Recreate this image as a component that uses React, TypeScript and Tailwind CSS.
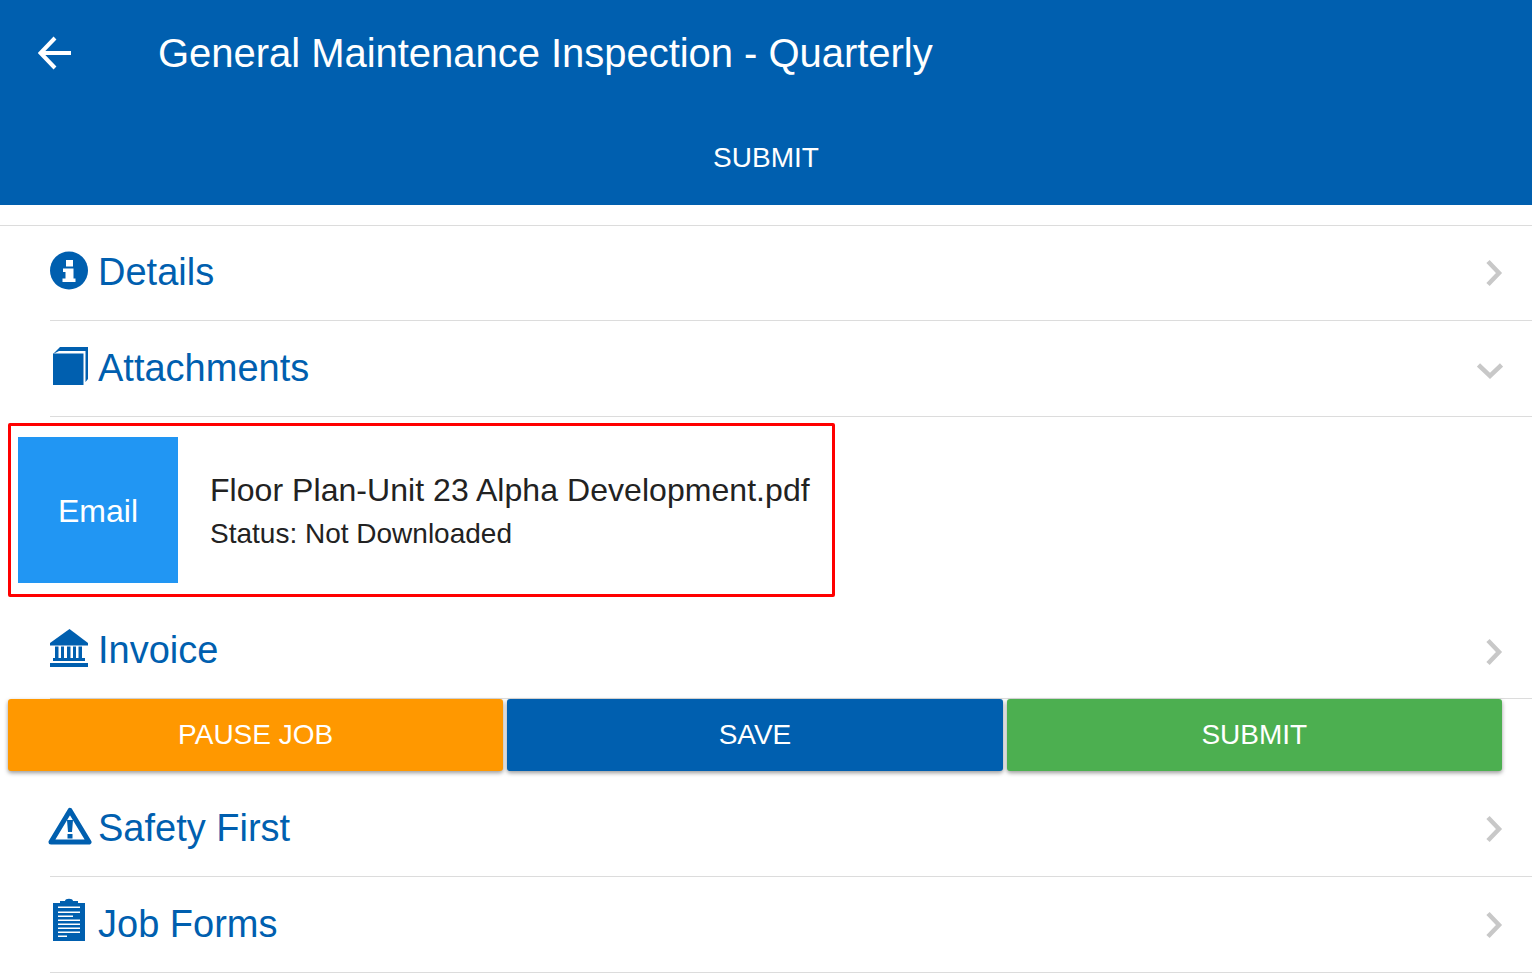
function ChevronRight() {
  return (
    <svg width="18" height="28" viewBox="0 0 18 28" className="shrink-0">
      <path d="M3 2.5 L14 14 L3 25.5" fill="none" stroke="#c8c8c8" strokeWidth="4.5" />
    </svg>
  );
}

function ChevronDown() {
  return (
    <svg width="26" height="18" viewBox="0 0 26 18" className="shrink-0">
      <path d="M1.5 3 L13 14 L24.5 3" fill="none" stroke="#c8c8c8" strokeWidth="4.5" />
    </svg>
  );
}

function InfoIcon() {
  return (
    <svg width="39" height="39" viewBox="0 0 39 39">
      <circle cx="19" cy="19.5" r="19" fill="#005faf" />
      <path d="M16 9 H23 V15.5 H16 Z M13 17.5 H23.5 V27.5 H25.5 V31 H12.5 V27.5 H15.5 V21 H13 Z" fill="#fff" />
    </svg>
  );
}

function BookIcon() {
  return (
    <svg width="36" height="38" viewBox="0 0 36 38" fill="#005faf">
      <path d="M0 7 L7 0 H35 V32 L32.5 35 V4 H6 Z" />
      <path d="M0 6.5 H30.5 V38 H0 Z" />
      <path d="M6 5.3 H32" stroke="#fff" strokeWidth="0.8" opacity="0.6" />
    </svg>
  );
}

function BankIcon() {
  return (
    <svg width="39" height="38" viewBox="0 0 39 38" fill="#005faf">
      <path d="M19.5 0 L38 14 V16.5 H0 V14 Z" />
      <path d="M5 17.5 H8.5 V29 H5 Z M11 17.5 H14 V29 H11 Z M17 17.5 H20.5 V29 H17 Z M23 17.5 H26 V29 H23 Z M28.5 17.5 H32 V29 H28.5 Z" />
      <path d="M3 29 H35 V32 H3 Z M0 34 H38 V38 H0 Z" />
    </svg>
  );
}

function WarningIcon() {
  return (
    <svg width="44" height="38" viewBox="0 0 44 38">
      <path d="M22 3.5 L41 35 L3 35 Z" fill="none" stroke="#005faf" strokeWidth="5" strokeLinejoin="round" />
      <path d="M19 13 H25 L24 25 H20 Z M19.5 27 H24.5 V31.5 H19.5 Z" fill="#005faf" />
    </svg>
  );
}

function ClipboardIcon() {
  return (
    <svg width="32" height="43" viewBox="0 0 32 43" fill="#005faf">
      <path d="M0 5 H32 V43 H0 Z" />
      <path d="M5 8.5 H27 V10 H5 Z M5 13.5 H27 V15 H5 Z M5 17.5 H20 V19 H5 Z M5 21.5 H27 V23 H5 Z M5 25.5 H27 V27 H5 Z M5 29.5 H27 V31 H5 Z M5 33.5 H27 V35 H5 Z M5 37.5 H14 V39 H5 Z" fill="#fff" />
      <path d="M7 3 H12 C12 0 20 0 20 3 H25 V8 H7 Z" />
    </svg>
  );
}

function SectionRow({ icon, label, gap, open, height, chevron = '' }: { icon: React.ReactNode; label: string; gap: string; open?: boolean; height: string; chevron?: string }) {
  return (
    <div className={`ml-[50px] flex items-center border-b border-[#dcdcdc] ${height}`}>
      <div className="flex flex-1 items-center">
        {icon}
        <span className={`pb-[2px] text-[38px] leading-none text-[#005faf] ${gap}`}>{label}</span>
      </div>
      <div className={`mr-[29px] ${chevron}`}>{open ? <ChevronDown /> : <ChevronRight />}</div>
    </div>
  );
}

export default function App() {
  return (
    <div className="h-[978px] w-[1532px] overflow-hidden bg-white font-['Liberation_Sans',Arial,sans-serif]">
      {/* Header */}
      <header className="flex h-[205px] flex-col bg-[#005faf] text-white">
        <div className="flex h-[105px] shrink-0 items-center pl-[38px]">
          <svg width="34" height="34" viewBox="0 0 34 34" fill="none" stroke="#fff" strokeWidth="4" className="shrink-0">
            <path d="M33 17 H3 M17 2 L2.5 17 L17 32" />
          </svg>
          <h1 className="ml-[86px] text-[40px] font-normal leading-none tracking-[-0.03px]">General Maintenance Inspection - Quarterly</h1>
        </div>
        <div className="flex h-[100px] items-center justify-center pt-[6px] text-[28px] leading-none">SUBMIT</div>
      </header>

      <div className="mt-5 border-t border-[#dcdcdc]">
        <SectionRow height="h-[95px]" gap="ml-[9px]" label="Details" icon={<div className="mb-[6px]"><InfoIcon /></div>} />
        <SectionRow height="h-[96px]" gap="ml-[9px]" label="Attachments" open chevron="mt-[4px]" icon={<div className="mb-[6px] ml-[3px]"><BookIcon /></div>} />

        {/* Attachment */}
        <div className="ml-2 mt-[6px] flex h-[174px] w-[827px] items-center rounded-[2px] border-[3px] border-[#ff0000] pl-[7px]">
          <div className="flex h-[146px] w-40 items-center justify-center bg-[#2196f3] pt-[2px] text-[32px] text-white">Email</div>
          <div className="ml-8 pt-[1px] text-[#222]">
            <div className="text-[32px] leading-[40px] tracking-[0.05px]">Floor Plan-Unit 23 Alpha Development.pdf</div>
            <div className="mt-[7px] text-[28px] leading-[34px]">Status: Not Downloaded</div>
          </div>
        </div>

        <div className="pt-[6px]">
          <SectionRow height="h-[96px]" gap="ml-[9px]" label="Invoice" chevron="mt-[2px]" icon={<div className="mb-[6px]"><BankIcon /></div>} />
        </div>

        {/* Actions */}
        <div className="flex gap-1 pl-2 pr-[30px]">
          <button className="h-[72px] flex-1 rounded-[3px] bg-[#ff9800] text-[28px] text-white shadow-[0_2px_4px_rgba(0,0,0,0.4)]">PAUSE JOB</button>
          <button className="h-[72px] flex-1 rounded-[3px] bg-[#005faf] text-[28px] text-white shadow-[0_2px_4px_rgba(0,0,0,0.4)]">SAVE</button>
          <button className="h-[72px] flex-1 rounded-[3px] bg-[#4caf50] text-[28px] text-white shadow-[0_2px_4px_rgba(0,0,0,0.4)]">SUBMIT</button>
        </div>

        <div className="mt-[10px]">
          <SectionRow height="h-[96px]" gap="ml-[6px]" label="Safety First" icon={<div className="-ml-[2px] mb-[6px]"><WarningIcon /></div>} />
          <SectionRow height="h-[96px]" gap="ml-[13px]" label="Job Forms" icon={<div className="mb-[11px] ml-[3px]"><ClipboardIcon /></div>} />
        </div>
      </div>
    </div>
  );
}
